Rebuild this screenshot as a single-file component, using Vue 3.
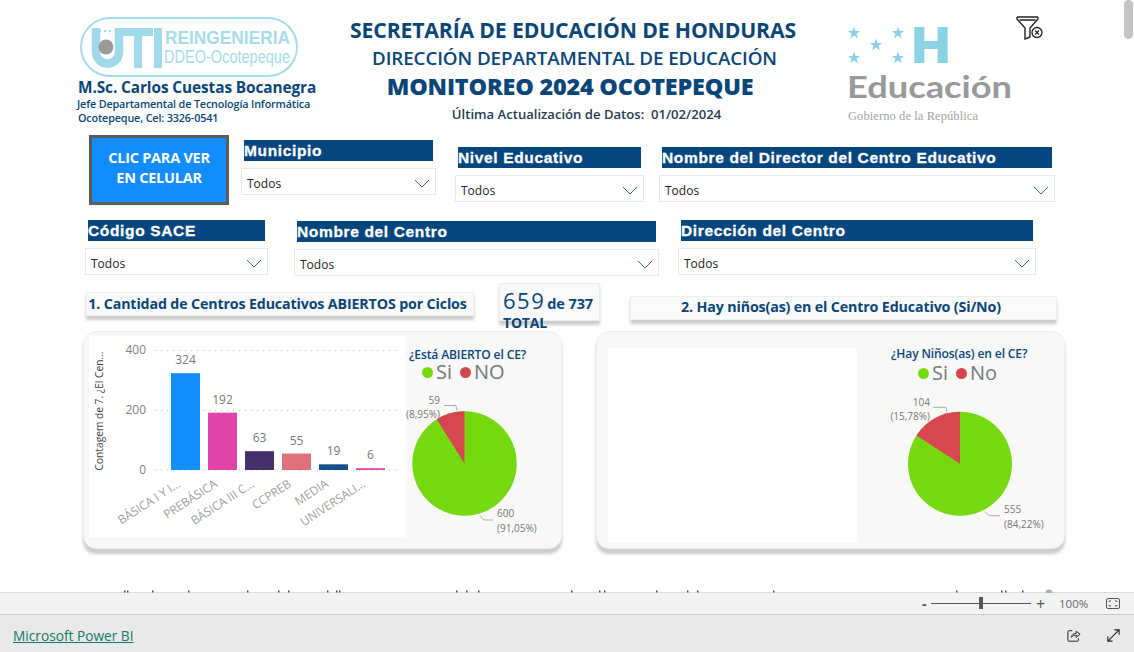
<script setup>
const row1 = [
  { label: 'Municipio', cls: 'f-muni' },
  { label: 'Nivel Educativo', cls: 'f-nivel' },
  { label: 'Nombre del Director del Centro Educativo', cls: 'f-director' },
];
const row2 = [
  { label: 'Código SACE', cls: 'f-sace' },
  { label: 'Nombre del Centro', cls: 'f-centro' },
  { label: 'Dirección del Centro', cls: 'f-direccion' },
];

const bars = [
  { name: 'BÁSICA I Y I...', value: 324, color: '#118dff', x: 82 },
  { name: 'PREBÁSICA', value: 192, color: '#e044a7', x: 119 },
  { name: 'BÁSICA III C...', value: 63, color: '#45306a', x: 156 },
  { name: 'CCPREB', value: 55, color: '#e0707c', x: 193 },
  { name: 'MEDIA', value: 19, color: '#12508a', x: 230 },
  { name: 'UNIVERSALI...', value: 6, color: '#e044a7', x: 267 },
];
// 400 on the axis is 119.5px high
const barH = (v) => (v * 119.5) / 400;
const baseY = 134;

const stars = [
  [155, 33], [199, 33], [177, 45], [155, 58], [199, 58],
];
const starPts = (cx, cy) => {
  const pts = [];
  for (let i = 0; i < 10; i++) {
    const r = i % 2 ? 2.6 : 6.4;
    const a = (Math.PI / 5) * i - Math.PI / 2;
    pts.push(`${(cx + r * Math.cos(a)).toFixed(1)},${(cy + r * Math.sin(a)).toFixed(1)}`);
  }
  return pts.join(' ');
};

// tops of the next row of the report, cut off by the bar below
const cutMarks = [124, 127, 152, 188, 247, 278, 288, 327, 336, 339, 456, 466, 478, 571, 599, 604, 656, 687, 697, 773, 956, 1001, 1005, 1022];
</script>

<template>
  <div class="viewer">
    <div class="report">
      <header class="head">
        <div class="brand">
          <svg class="uti" width="222" height="62" viewBox="0 0 222 62">
            <rect x="2" y="2" width="216" height="58" rx="29" fill="#fff" stroke="#a6dcea" stroke-width="2" />
            <path d="M17 12v24a11.500 11.500 0 0 0 23 0V12" fill="none" stroke="#a0d9e9" stroke-width="8.500" />
            <rect x="44" y="12" width="30" height="8" fill="#a0d9e9" />
            <rect x="55" y="12" width="8" height="40" fill="#a0d9e9" />
            <rect x="75" y="12" width="8" height="40" fill="#a0d9e9" />
            <circle cx="27" cy="31" r="7.500" fill="#9a9a9a" />
            <path d="M20 15h15" stroke="#a0d9e9" stroke-width="2" stroke-dasharray="2 3" />
            <text x="86" y="28" class="uti-a" textLength="125" lengthAdjust="spacingAndGlyphs">REINGENIERIA</text>
            <text x="85" y="47" class="uti-b" textLength="126" lengthAdjust="spacingAndGlyphs">DDEO-Ocotepeque</text>
          </svg>
          <div class="person">M.Sc. Carlos Cuestas Bocanegra</div>
          <div class="job">Jefe Departamental de Tecnología Informática</div>
          <div class="job job-2">Ocotepeque, Cel: 3326-0541</div>
        </div>

        <div class="titles">
          <h1 class="t1">SECRETARÍA DE EDUCACIÓN DE HONDURAS</h1>
          <h2 class="t2">DIRECCIÓN DEPARTAMENTAL DE EDUCACIÓN</h2>
          <h2 class="t3">MONITOREO 2024 OCOTEPEQUE</h2>
          <p class="t4">Última Actualización de Datos:&nbsp; 01/02/2024</p>
        </div>

        <svg class="edu" width="172" height="106" viewBox="140 20 172 106">
          <polygon v-for="s in stars" :key="s[0] + '-' + s[1]" :points="starPts(s[0], s[1])" fill="#8bd3e3" />
          <text x="213" y="63" class="edu-h" textLength="38" lengthAdjust="spacingAndGlyphs">H</text>
          <text x="148" y="98" class="edu-name" textLength="165" lengthAdjust="spacingAndGlyphs">Educación</text>
          <text x="149" y="120" class="edu-gov" textLength="130">Gobierno de la República</text>
        </svg>

        <svg class="clear-filter" width="28" height="26" viewBox="0 0 28 26">
          <path d="M1 2h21M1 2l0 2 8 9v11l5-2v-9l8-9V2M3.500 5h16" fill="none" stroke="#222" stroke-width="1.400" />
          <circle cx="21" cy="17.500" r="5" fill="#fff" stroke="#222" stroke-width="1.300" />
          <path d="M19 15.500l4 4M23 15.500l-4 4" stroke="#222" stroke-width="1.100" />
        </svg>
      </header>

      <section class="filters-one">
        <button class="phone-btn">CLIC PARA VER<br />EN CELULAR</button>
        <div v-for="f in row1" :key="f.label" class="filter" :class="f.cls">
          <div class="filter-label">{{ f.label }}</div>
          <div class="select">
            <span>Todos</span>
            <svg width="16" height="9" viewBox="0 0 16 9"><path d="M1 1l7 7 7-7" fill="none" stroke="#2f6d9e" stroke-width="1" /></svg>
          </div>
        </div>
      </section>

      <section class="filters-two">
        <div v-for="f in row2" :key="f.label" class="filter" :class="f.cls">
          <div class="filter-label">{{ f.label }}</div>
          <div class="select">
            <span>Todos</span>
            <svg width="16" height="9" viewBox="0 0 16 9"><path d="M1 1l7 7 7-7" fill="none" stroke="#2f6d9e" stroke-width="1" /></svg>
          </div>
        </div>
      </section>

      <section class="captions">
        <div class="caption cap-one">1. Cantidad de Centros Educativos ABIERTOS por Ciclos</div>
        <div class="stat">
          <div class="stat-line"><span class="stat-num">659</span><span class="stat-of">de 737</span></div>
          <div class="stat-total">TOTAL</div>
        </div>
        <div class="caption cap-two">2. Hay niños(as) en el Centro Educativo (Si/No)</div>
      </section>

      <section class="cards">
        <div class="card card-one">
          <svg class="bar-chart" width="317" height="201" viewBox="0 0 317 201">
            <text transform="translate(14 75) rotate(-90)" class="axis-title" text-anchor="middle">Contagem de 7. ¿El Cen...</text>
            <g v-for="t in [[400, 14.500], [200, 74.500], [0, 134]]" :key="t[0]">
              <line x1="66" x2="308" :y1="t[1]" :y2="t[1]" stroke="#bbb" stroke-width="1" stroke-dasharray="1 5" />
              <text x="57" :y="t[1] + 3.500" text-anchor="end" class="tick">{{ t[0] }}</text>
            </g>
            <g v-for="b in bars" :key="b.name">
              <rect :x="b.x" :y="baseY - barH(b.value)" width="29" :height="barH(b.value)" :fill="b.color" />
              <text :x="b.x + 14.500" :y="baseY - barH(b.value) - 9" text-anchor="middle" class="bar-num">{{ b.value }}</text>
              <text :transform="`translate(${b.x + 10} 150) rotate(-33)`" text-anchor="end" class="cat">{{ b.name }}</text>
            </g>
          </svg>

          <div class="pie-box pie-box-one">
            <div class="pie-title">¿Está ABIERTO el CE?</div>
            <div class="legend"><i class="dot green"></i><span>Si</span><i class="dot red"></i><span>NO</span></div>
            <svg width="150" height="152" viewBox="0 -12 150 152">
              <circle cx="59.500" cy="62.500" r="52.200" fill="#76d80f" />
              <path d="M59.500 62.500V10.300A52.200 52.200 0 0 0 31.700 18.300Z" fill="#d64550" />
              <path d="M39 4.500h12l1 5M75 114.700l4 4.300h9" fill="none" stroke="#aaa" />
              <text x="35" y="3" text-anchor="end" class="pie-num">59</text>
              <text x="35" y="17" text-anchor="end" class="pie-num">(8,95%)</text>
              <text x="92" y="116" class="pie-num">600</text>
              <text x="92" y="131" class="pie-num">(91,05%)</text>
            </svg>
          </div>
        </div>

        <div class="card card-two">
          <div class="blank"></div>
          <div class="pie-box pie-box-two">
            <div class="pie-title">¿Hay Niños(as) en el CE?</div>
            <div class="legend"><i class="dot green"></i><span>Si</span><i class="dot red"></i><span>No</span></div>
            <svg width="170" height="152" viewBox="0 -12 170 152">
              <circle cx="82" cy="62.800" r="52" fill="#76d80f" />
              <path d="M82 62.800V10.800A52 52 0 0 0 38.500 34.400Z" fill="#d64550" />
              <path d="M55 6.300h13l1 5M107 110.700l4 4h11" fill="none" stroke="#aaa" />
              <text x="52" y="5" text-anchor="end" class="pie-num">104</text>
              <text x="52" y="19" text-anchor="end" class="pie-num">(15,78%)</text>
              <text x="126" y="112" class="pie-num">555</text>
              <text x="126" y="127" class="pie-num">(84,22%)</text>
            </svg>
          </div>
        </div>
      </section>
    </div>

    <svg class="cut-row" width="1134" height="6" viewBox="0 0 1134 6">
      <rect v-for="x in cutMarks" :key="x" :x="x" y="3.500" width="1.500" height="2" fill="#3d4f66" />
      <path d="M1045.500 6a3.500 3.500 0 0 1 7 0z" fill="#adadad" />
    </svg>

    <div class="zoom-bar">
      <span class="minus">-</span>
      <div class="slider"><i></i></div>
      <span class="plus">+</span>
      <span class="pct">100%</span>
      <svg width="14" height="11" viewBox="0 0 14 11">
        <rect x="0.500" y="0.500" width="13" height="10" rx="1.500" fill="none" stroke="#555" />
        <path d="M3 4V3h2M9 3h2v1M3 7v1h2M9 8h2V7" fill="none" stroke="#555" />
      </svg>
    </div>

    <footer class="foot">
      <a class="pbi" href="#">Microsoft Power BI</a>
      <div class="foot-icons">
        <svg width="14" height="15" viewBox="0 0 16 16">
          <path d="M6 2.500H2a1 1 0 0 0-1 1v10a1 1 0 0 0 1 1h10a1 1 0 0 0 1-1V11" fill="none" stroke="#222" stroke-width="1.100" />
          <path d="M5 10c.5-3 2.500-4.500 5.500-4.500V3L15 6.500 10.500 10V7.500C8.500 7.500 6.500 8.200 5 10z" fill="none" stroke="#222" stroke-width="1.100" />
        </svg>
        <svg width="13" height="13" viewBox="0 0 15 15">
          <path d="M1 14L14 1M8.500 1H14v5.500M1 8.500V14h5.500" fill="none" stroke="#222" stroke-width="1.200" />
        </svg>
      </div>
    </footer>

    <div class="scroll-thumb"></div>
  </div>
</template>

<style>
html, body { margin: 0; background: #fff; overflow: hidden; }
</style>

<style scoped>
.viewer {
  position: relative;
  width: 1134px;
  height: 652px;
  display: flex;
  flex-direction: column;
  overflow: hidden;
  font-family: "Open Sans", "Noto Sans", sans-serif;
  color: #0a4578;
}

.report {
  height: 592px;
  overflow: hidden;
  box-sizing: border-box;
}

/* header */
.head {
  height: 135px;
  display: flex;
  position: relative;
}
.brand {
  width: 250px;
  margin-left: 77px;
  padding-top: 16px;
}
.uti { display: block; margin-left: 2px; margin-bottom: 1px; }
.uti-a { font: 700 19px "Liberation Sans", sans-serif; fill: #a6dcea; }
.uti-b { font: 400 18px "Liberation Sans", sans-serif; fill: #a6dcea; }
.person {
  font-size: 15.400px;
  font-weight: 700;
  line-height: 18px;
  margin-left: 1px;
  letter-spacing: -0.100px;
  white-space: nowrap;
}
.job {
  font-size: 10.800px;
  font-weight: 600;
  line-height: 14px;
  white-space: nowrap;
  letter-spacing: -0.150px;
}
.job-2 { margin-left: 1px; }

.titles {
  width: 470px;
  margin-left: 11px;
  padding-top: 17px;
  text-align: center;
  white-space: nowrap;
}
.titles h1, .titles h2, .titles p { margin: 0; }
.t1 { font-size: 21.200px; line-height: 26px; font-weight: 700; letter-spacing: -0.150px; }
.t2 { font-size: 18.800px; line-height: 30px; font-weight: 600; letter-spacing: -0.100px; padding-left: 3px; }
.t3 { font-size: 23.400px; line-height: 26px; font-weight: 800; letter-spacing: -0.200px; padding-right: 6px; }
.t4 { font-size: 13.100px; line-height: 31px; font-weight: 600; color: #1f3a55; padding-left: 27px; }

.edu { margin-left: 31px; margin-top: 20px; }
.edu-h { font: 900 50px Inter, "Liberation Sans", sans-serif; fill: #8bd3e3; }
.edu-name { font: 700 31px Lato, sans-serif; fill: #98999b; }
.edu-gov { font: 400 12.500px "Liberation Serif", serif; fill: #a3a3a3; }

.clear-filter { position: absolute; left: 1016px; top: 15px; }

/* slicers */
.filters-one { display: flex; padding-left: 89px; height: 70px; }
.filters-two { display: flex; padding-left: 85px; margin-top: 15px; height: 56px; }

.phone-btn {
  width: 140px;
  height: 70px;
  box-sizing: border-box;
  background: #118dff;
  border: 3px solid #5b5b5b;
  color: #fff;
  font-family: inherit;
  font-size: 14.500px;
  font-weight: 700;
  line-height: 20px;
  letter-spacing: -0.250px;
  padding: 0 0 5px;
}

.filter { display: flex; flex-direction: column; }
.filter-label {
  height: 21px;
  margin: 0 3px 7px;
  background: #06467f;
  color: #fff;
  font: 700 15.500px "Liberation Sans", sans-serif;
  line-height: 21px;
  white-space: nowrap;
  letter-spacing: 0.650px;
  -webkit-text-stroke: 0.300px #fff;
}
.select {
  height: 27px;
  box-sizing: border-box;
  border: 1px solid #e8e8e8;
  background: #fff;
  display: flex;
  align-items: center;
  justify-content: space-between;
  padding: 3px 5px 0;
  font-size: 12px;
  color: #222;
}

.f-muni { width: 195px; margin: 5px 0 0 12px; }
.f-nivel { width: 189px; margin: 12px 0 0 19px; }
.f-director { width: 396px; margin: 12px 0 0 15px; }
.f-sace { width: 183px; }
.f-centro { width: 365px; margin: 1px 0 0 26px; }
.f-direccion { width: 358px; margin-left: 19px; }

/* captions */
.captions { display: flex; padding-left: 86px; margin-top: 7px; height: 48px; }
.caption {
  background: #fafafa;
  border: 1px solid #eee;
  box-shadow: 0 4px 3px #ccc;
  box-sizing: border-box;
  height: 24px;
  font-size: 14.250px;
  font-weight: 700;
  line-height: 21px;
  text-align: center;
  white-space: nowrap;
  letter-spacing: -0.150px;
}
.cap-one { width: 388px; margin-top: 9px; padding-right: 5px; }
.cap-two { width: 427px; margin: 13px 0 0 30px; padding-right: 5px; line-height: 20px; }

.stat {
  width: 101px;
  height: 38px;
  margin-left: 25px;
  box-sizing: border-box;
  background: #fafafa;
  border: 1px solid #eee;
  box-shadow: 0 4px 3px #ccc;
  padding-left: 3px;
}
.stat-line { display: flex; align-items: baseline; height: 25px; margin-top: 2px; }
.stat-num { font-size: 22px; line-height: 28px; letter-spacing: 1.500px; margin-right: 2px; }
.stat-of { font-size: 14.500px; font-weight: 700; letter-spacing: -0.100px; }
.stat-total { font-size: 14px; font-weight: 700; line-height: 16px; letter-spacing: -0.200px; margin-top: 4px; }

/* cards */
.cards { display: flex; padding-left: 83px; height: 226px; }
.card {
  height: 218px;
  box-sizing: border-box;
  background: #f8f8f8;
  border: 1px solid #eee;
  border-radius: 13px;
  box-shadow: 0 5px 3px #ccc;
  display: flex;
}
.card-one { width: 479px; padding: 4px 0 0 5px; }
.card-two { width: 469px; margin-left: 34px; padding: 16px 0 0 11px; }
.bar-chart { background: #fff; display: block; flex: none; }
.blank { width: 249px; height: 195px; background: #fff; flex: none; }

.pie-box { display: flex; flex-direction: column; }
.pie-box-one { width: 150px; margin-left: -1px; }
.pie-box-two { width: 170px; margin-left: 21px; margin-top: -16px; padding-top: 14px; }
.pie-box-one svg { display: block; margin-top: 7px; }
.pie-box-two svg { display: block; margin-top: 6px; }
.pie-title {
  font-size: 12.100px;
  font-weight: 600;
  line-height: 16px;
  white-space: nowrap;
  letter-spacing: -0.150px;
}
.pie-box-one .pie-title { margin: 11px 0 0 4px; }
.pie-box-two .pie-title { margin: 0 0 0 13px; }
.legend {
  display: flex;
  align-items: center;
  height: 20px;
  font-size: 20px;
  color: #777;
  line-height: 20px;
}
.pie-box-one .legend { margin: -1px 0 0 17px; }
.pie-box-two .legend { margin: 1px 0 0 40px; }
.dot { width: 11px; height: 11px; border-radius: 50%; margin-right: 3px; }
.dot.red { margin-left: 8px; }
.green { background: #76d80f; }
.red { background: #d64550; }

.axis-title { font-size: 10.200px; fill: #444; }
.tick { font-size: 12px; fill: #808080; }
.bar-num { font-size: 12px; fill: #777; }
.cat { font-size: 12px; fill: #a0a0a0; letter-spacing: -0.100px; }
.pie-num { font-size: 10px; fill: #777; }

/* bottom bars */
.cut-row { position: absolute; left: 0; top: 587px; }

.zoom-bar {
  height: 23px;
  box-sizing: border-box;
  background: #f3f3f3;
  border-top: 1px solid #ddd;
  border-bottom: 1px solid #c8c8c8;
  display: flex;
  align-items: center;
  padding-left: 922px;
  color: #555;
}
.minus { width: 9px; font-size: 14px; font-weight: 700; line-height: 20px; }
.slider { position: relative; width: 100px; height: 1px; background: #555; }
.slider i { position: absolute; left: 48px; top: -6px; width: 4px; height: 12px; background: #555; }
.plus { margin-left: 5px; width: 14px; font-size: 16px; line-height: 20px; }
.pct { margin-left: 9px; width: 47px; font-size: 11.500px; color: #666; }

.foot {
  flex: 1;
  background: #e9e9e9;
  display: flex;
  align-items: center;
  justify-content: space-between;
  padding: 0 14px 0 13px;
}
.pbi { font-size: 13.700px; color: #117865; text-decoration: underline; padding-top: 4px; }
.foot-icons { display: flex; gap: 26px; align-items: center; padding-top: 4px; }

.scroll-thumb {
  position: absolute;
  right: 1px;
  top: 0;
  width: 9px;
  height: 39px;
  border-radius: 5px;
  background: #c4c4c4;
}
</style>
